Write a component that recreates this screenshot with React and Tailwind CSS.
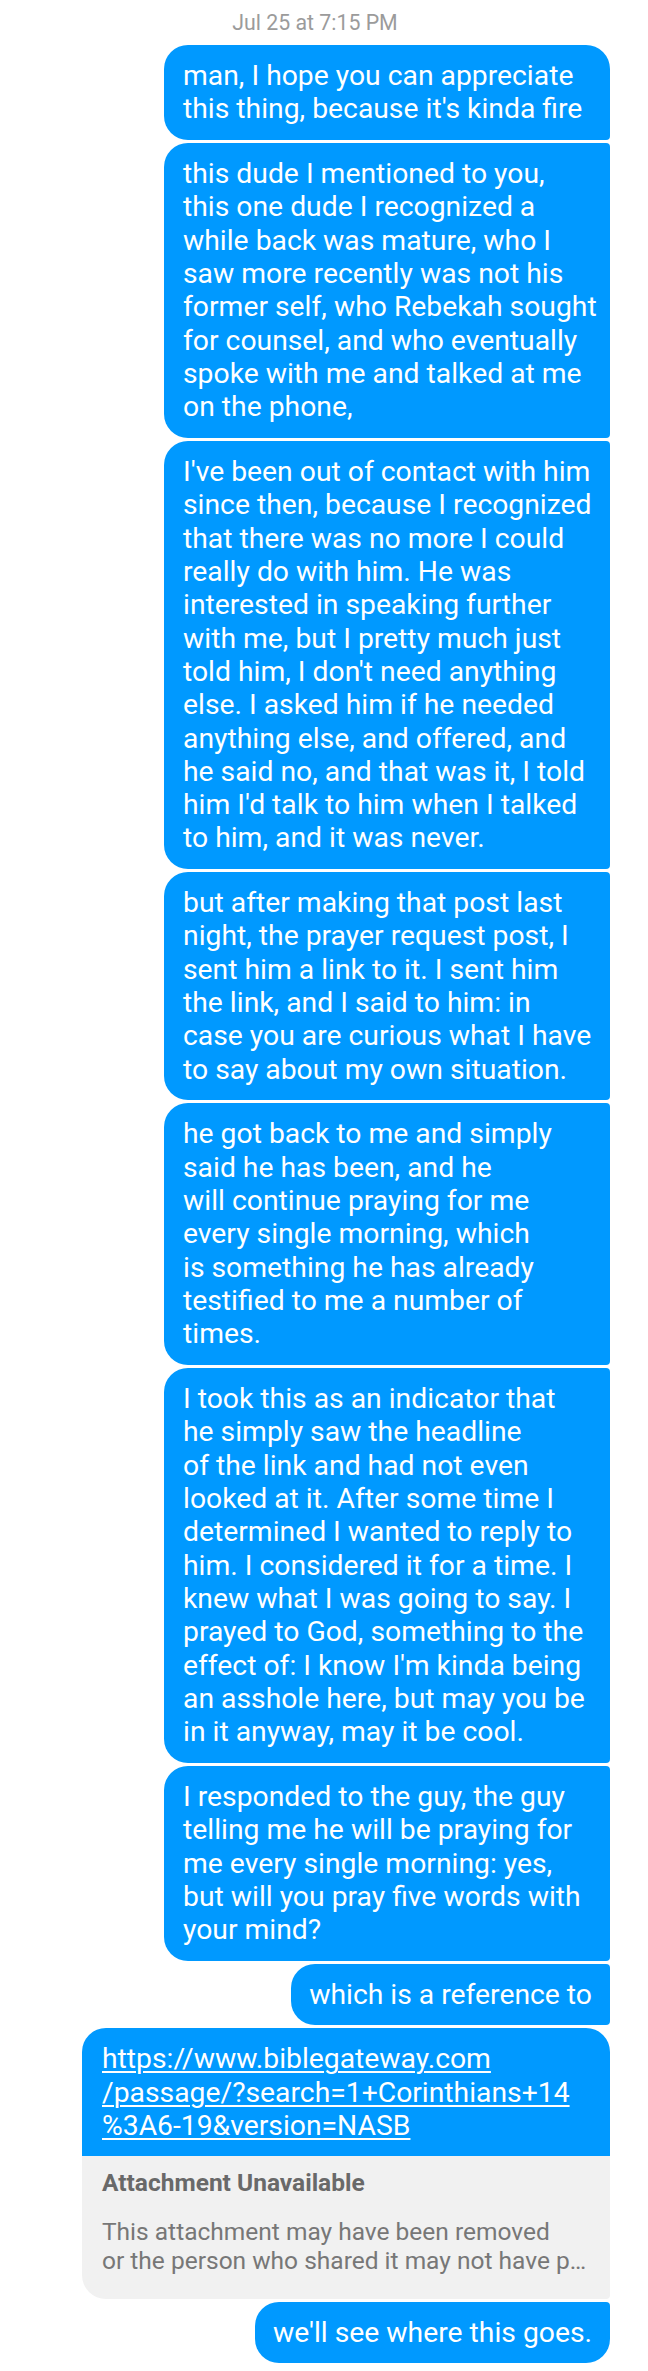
import React from "react";

const BLUE = "bg-[#0099ff]";

const sent = [
  {
    lines: ["man, I hope you can appreciate", "this thing, because it's kinda fire"],
    radius: "rounded-[24px] rounded-br-[4px]",
  },
  {
    lines: [
      "this dude I mentioned to you,",
      "this one dude I recognized a",
      "while back was mature, who I",
      "saw more recently was not his",
      "former self, who Rebekah sought",
      "for counsel, and who eventually",
      "spoke with me and talked at me",
      "on the phone,",
    ],
  },
  {
    lines: [
      "I've been out of contact with him",
      "since then, because I recognized",
      "that there was no more I could",
      "really do with him. He was",
      "interested in speaking further",
      "with me, but I pretty much just",
      "told him, I don't need anything",
      "else. I asked him if he needed",
      "anything else, and offered, and",
      "he said no, and that was it, I told",
      "him I'd talk to him when I talked",
      "to him, and it was never.",
    ],
  },
  {
    lines: [
      "but after making that post last",
      "night, the prayer request post, I",
      "sent him a link to it. I sent him",
      "the link, and I said to him: in",
      "case you are curious what I have",
      "to say about my own situation.",
    ],
  },
  {
    lines: [
      "he got back to me and simply",
      "said he has been, and he",
      "will continue praying for me",
      "every single morning, which",
      "is something he has already",
      "testified to me a number of",
      "times.",
    ],
  },
  {
    lines: [
      "I took this as an indicator that",
      "he simply saw the headline",
      "of the link and had not even",
      "looked at it. After some time I",
      "determined I wanted to reply to",
      "him. I considered it for a time. I",
      "knew what I was going to say. I",
      "prayed to God, something to the",
      "effect of: I know I'm kinda being",
      "an asshole here, but may you be",
      "in it anyway, may it be cool.",
    ],
  },
  {
    lines: [
      "I responded to the guy, the guy",
      "telling me he will be praying for",
      "me every single morning: yes,",
      "but will you pray five words with",
      "your mind?",
    ],
  },
];

function SentBubble({ lines, radius, wide = true }) {
  return (
    <div className="flex justify-end">
      <div
        className={`${BLUE} text-white py-[14px] text-[28.3px] leading-[33.33px] whitespace-nowrap ${
          wide ? "w-[446px] px-[19px]" : "px-[18px]"
        } ${radius || "rounded-l-[24px] rounded-r-[4px]"}`}
      >
        {lines.map((l, i) => (
          <div key={i}>{l}</div>
        ))}
      </div>
    </div>
  );
}

export default function App() {
  return (
    <div
      className="w-[648px] min-h-[2371px] bg-white pr-[38px] pl-[82px] pb-[8px]"
      style={{ fontFamily: "Roboto, 'Noto Sans', sans-serif" }}
    >
      {/* date divider */}
      <div className="-ml-[82px] pl-[20px] pt-[10px] pb-[10px] text-center text-[21.3px] leading-[25px] text-[#9b9b9b]">
        Jul 25 at 7:15 PM
      </div>

      <div className="flex flex-col gap-[3.3px]">
        {sent.map((m, i) => (
          <SentBubble key={i} lines={m.lines} radius={m.radius} />
        ))}
        <SentBubble lines={["which is a reference to"]} wide={false} />

        {/* shared link, attachment gone */}
        <div className="flex flex-col">
          <div className={`${BLUE} rounded-t-[24px] px-[20px] py-[14px] text-[28.3px] leading-[33.33px] text-white whitespace-nowrap`}>
            <div className="underline decoration-[1.5px] underline-offset-[3px]">https://www.biblegateway.com</div>
            <div className="underline decoration-[1.5px] underline-offset-[3px]">/passage/?search=1+Corinthians+14</div>
            <div className="underline decoration-[1.5px] underline-offset-[3px]">%3A6-19&amp;version=NASB</div>
          </div>
          <div className="bg-[#f1f1f1] rounded-bl-[24px] rounded-br-[4px] px-[20px] pt-[13px] pb-[23px] whitespace-nowrap">
            <div className="text-[24.5px] leading-[28.7px] font-bold text-[#696969]">Attachment Unavailable</div>
            <div className="mt-[20px] text-[24.5px] leading-[28.7px] text-[#777777]">
              <div>This attachment may have been removed</div>
              <div>or the person who shared it may not have p…</div>
            </div>
          </div>
        </div>

        <SentBubble
          lines={["we'll see where this goes."]}
          wide={false}
          radius="rounded-[24px] rounded-tr-[4px]"
        />
      </div>
    </div>
  );
}
